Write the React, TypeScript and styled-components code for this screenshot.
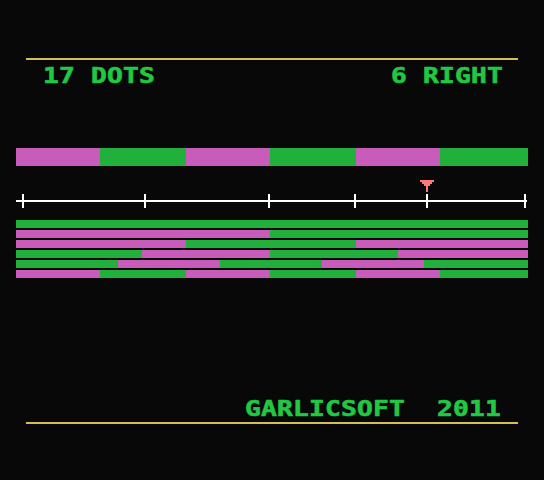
import styled, { createGlobalStyle } from 'styled-components'

const colors = {
  Screen: '#080808',
  Text: '#21C842',
  Green: '#21B03B',
  Magenta: '#C95BBA',
  Rule: '#D4C154',
  Ruler: '#FFFFFF',
  Marker: '#FF7978',
}

type Seg = { c: 'G' | 'M'; w: number }

const seg = (list: string): Seg[] =>
  list.split(' ').map((s) => ({ c: s[0] as 'G' | 'M', w: Number(s.slice(1)) }))

const bigBar = seg('M84 G86 M84 G86 M84 G88')

const rows: Seg[][] = [
  seg('G512'),
  seg('M254 G258'),
  seg('M170 G170 M172'),
  seg('G126 M128 G128 M130'),
  seg('G102 M102 G102 M102 G104'),
  seg('M84 G86 M84 G86 M84 G88'),
]

const ticks = [6, 128, 252, 338, 410, 508]

const GlobalStyle = createGlobalStyle`
  html, body {
    margin: 0;
    padding: 0;
    background: ${colors.Screen};
  }
`

const App = () => {
  return (
    <>
      <GlobalStyle />
      <Screen>
        <Rule />
        <Header>
          <Label>17 DOTS</Label>
          <Label>6 RIGHT</Label>
        </Header>

        <Bar $height={18} $top={61}>
          {bigBar.map((s, i) => (
            <Segment key={i} $w={s.w} $c={s.c} />
          ))}
        </Bar>

        <Ruler>
          <RulerLine />
          {ticks.map((x) => (
            <Tick key={x} $x={x} />
          ))}
          <Marker viewBox="0 0 14 12" width={14} height={12}>
            <polygon
              points="0,0 14,0 14,2 12,2 12,4 10,4 10,6 8,6 8,12 6,12 6,6 4,6 4,4 2,4 2,2 0,2"
              fill={colors.Marker}
            />
          </Marker>
        </Ruler>

        <Stripes>
          {rows.map((row, r) => (
            <Bar key={r} $height={8}>
              {row.map((s, i) => (
                <Segment key={i} $w={s.w} $c={s.c} />
              ))}
            </Bar>
          ))}
        </Stripes>

        <Footer>
          <Label>GARLICSOFT  2011</Label>
        </Footer>
        <Rule $gap={2} />
      </Screen>
    </>
  )
}

export default App

const Screen = styled.div`
  width: 544px;
  height: 480px;
  background: ${colors.Screen};
  display: flex;
  flex-direction: column;
  padding-top: 58px;
  box-sizing: border-box;
  overflow: hidden;
`

const Rule = styled.div<{ $gap?: number }>`
  margin: ${({ $gap }) => $gap ?? 0}px 0 0 26px;
  width: 492px;
  height: 2px;
  flex: none;
  background: ${colors.Rule};
`

const Header = styled.div`
  display: grid;
  grid-template-columns: 348px auto;
  padding-left: 43px;
  margin-top: 6px;
  height: 21px;
`

const Label = styled.span`
  display: inline-block;
  font-family: 'DejaVu Sans Mono', 'Liberation Mono', monospace;
  font-weight: bold;
  font-size: 21px;
  line-height: 21px;
  letter-spacing: 0.16px;
  white-space: pre;
  color: ${colors.Text};
  -webkit-text-stroke: 0.6px ${colors.Text};
  transform: scaleX(1.25);
  transform-origin: left center;
`

const Bar = styled.div<{ $height: number; $top?: number }>`
  display: flex;
  flex: none;
  margin: ${({ $top }) => $top ?? 0}px 0 0 16px;
  width: 512px;
  height: ${({ $height }) => $height}px;
`

const Segment = styled.div<{ $w: number; $c: 'G' | 'M' }>`
  width: ${({ $w }) => $w}px;
  flex: none;
  background: ${({ $c }) => ($c === 'G' ? colors.Green : colors.Magenta)};
`

const Ruler = styled.div`
  position: relative;
  margin: 14px 0 0 16px;
  width: 512px;
  height: 28px;
  flex: none;
`

const RulerLine = styled.div`
  position: absolute;
  left: 0;
  top: 20px;
  width: 511px;
  height: 2px;
  background: ${colors.Ruler};
`

const Tick = styled.div<{ $x: number }>`
  position: absolute;
  top: 14px;
  left: ${({ $x }) => $x}px;
  width: 2px;
  height: 14px;
  background: ${colors.Ruler};
`

const Marker = styled.svg`
  position: absolute;
  left: 404px;
  top: 0;
  display: block;
`

const Stripes = styled.div`
  display: flex;
  flex-direction: column;
  flex: none;
  gap: 2px;
  margin-top: 12px;
`

const Footer = styled.div`
  padding-left: 245px;
  margin-top: 121px;
  height: 21px;
  flex: none;
`
